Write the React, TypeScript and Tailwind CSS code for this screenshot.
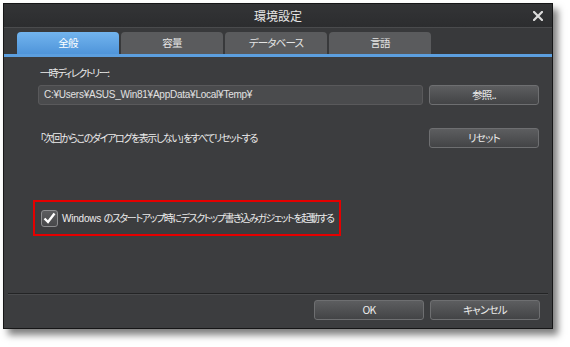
import React from "react";

const jp = "font-['Noto_Sans_CJK_JP','Noto_Sans',sans-serif] [font-feature-settings:'palt']";

function Btn({ children }: { children: React.ReactNode }) {
  return (
    <div
      className={`w-[110px] h-[20px] rounded-[3px] border border-[#6e6f71] bg-gradient-to-b from-[#5d5e60] to-[#434446] flex items-center justify-center text-[10.5px] tracking-[-0.8px] leading-none text-[#ececec] ${jp}`}
    >
      {children}
    </div>
  );
}

function Tab({ label, active }: { label: string; active?: boolean }) {
  return (
    <div
      className={`w-[102px] h-[22px] rounded-t-[4px] flex items-center justify-center text-[10.5px] tracking-[-0.8px] leading-none ${jp} ${
        active
          ? "bg-gradient-to-b from-[#72b4ee] to-[#4f95da] text-white"
          : "bg-[#5a5b5d] text-[#e4e4e4]"
      }`}
    >
      {label}
    </div>
  );
}

export default function App() {
  return (
    <div className="w-[570px] h-[347px] bg-white overflow-hidden">
      <div className="pt-[3px] pl-[3px]">
        <div className="w-[550px] h-[326px] border border-[#161617] bg-[#3c3d3f] flex flex-col shadow-[5px_6px_7px_rgba(0,0,0,0.5)]">
          {/* title bar */}
          <div className="h-[24px] border-b border-[#4a4b4d] bg-gradient-to-b from-[#333436] to-[#2c2d2f] flex items-center relative">
            <div className={`flex-1 text-center text-[12px] leading-none text-[#e6e6e6] ${jp}`}>環境設定</div>
            <svg className="absolute right-[9px] top-[7px]" width="10" height="10" viewBox="0 0 10 10">
              <path d="M1 1 L9 9 M9 1 L1 9" stroke="#dcdcdc" strokeWidth="2.2" strokeLinecap="square" />
            </svg>
          </div>
          {/* tabs */}
          <div className="h-[26px] bg-[#38393b] flex items-end gap-[2px] pl-[13px]">
            <Tab label="全般" active />
            <Tab label="容量" />
            <Tab label="データベース" />
            <Tab label="言語" />
          </div>
          <div className="h-[3px] bg-[#5c9fdf]" />
          {/* content */}
          <div className="h-[236px] flex flex-col pl-[34px] pr-[12px]">
            <div className={`mt-[9px] h-[14px] flex items-center pl-[2px] text-[10px] tracking-[-1.4px] leading-none text-[#ececec] ${jp}`}>
              一時ディレクトリー:
            </div>
            <div className="mt-[5px] flex gap-[6px]">
              <div className="w-[385px] h-[20px] rounded-[3px] border border-[#59595b] bg-[#4a4b4d] flex items-center pl-[5px] text-[10px] leading-none text-[#e2e2e2] font-['Liberation_Sans',sans-serif] tracking-[-0.25px]">
                C:¥Users¥ASUS_Win81¥AppData¥Local¥Temp¥
              </div>
              <Btn>参照..</Btn>
            </div>
            <div className="mt-[23px] flex items-center">
              <div className={`w-[391px] pl-[2px] text-[10px] tracking-[-1.4px] leading-none text-[#ececec] whitespace-nowrap ${jp}`}>
                「次回からこのダイアログを表示しない」をすべてリセットする
              </div>
              <Btn>リセット</Btn>
            </div>
            <div className="mt-[52px] -ml-[5px] w-[308px] h-[36px] border-2 border-[#e50000] flex items-center pl-[6px] gap-[4px]">
              <div className="w-[17px] h-[17px] shrink-0 rounded-[3px] border border-[#8c8d8f] bg-gradient-to-b from-[#5c5d5f] to-[#47484a] flex items-center justify-center">
                <svg width="13" height="12" viewBox="0 0 13 12">
                  <path d="M1.5 6.5 L5 10 L11.5 1.5" fill="none" stroke="#ffffff" strokeWidth="2.4" strokeLinejoin="miter" />
                </svg>
              </div>
              <div className={`text-[10px] tracking-[-1.4px] leading-none text-[#ececec] whitespace-nowrap ${jp}`}>
                <span className="font-['Liberation_Sans',sans-serif] tracking-[-0.2px]">Windows </span>のスタートアップ時にデスクトップ書き込みガジェットを起動する
              </div>
            </div>
          </div>
          {/* separator */}
          <div className="mx-[4px] h-[1px] bg-[#232425]" />
          <div className="mx-[4px] h-[1px] bg-[#4a4b4d]" />
          {/* footer */}
          <div className="flex-1 flex justify-end gap-[6px] pt-[5px] pr-[12px]">
            <Btn>OK</Btn>
            <Btn>キャンセル</Btn>
          </div>
        </div>
      </div>
    </div>
  );
}
